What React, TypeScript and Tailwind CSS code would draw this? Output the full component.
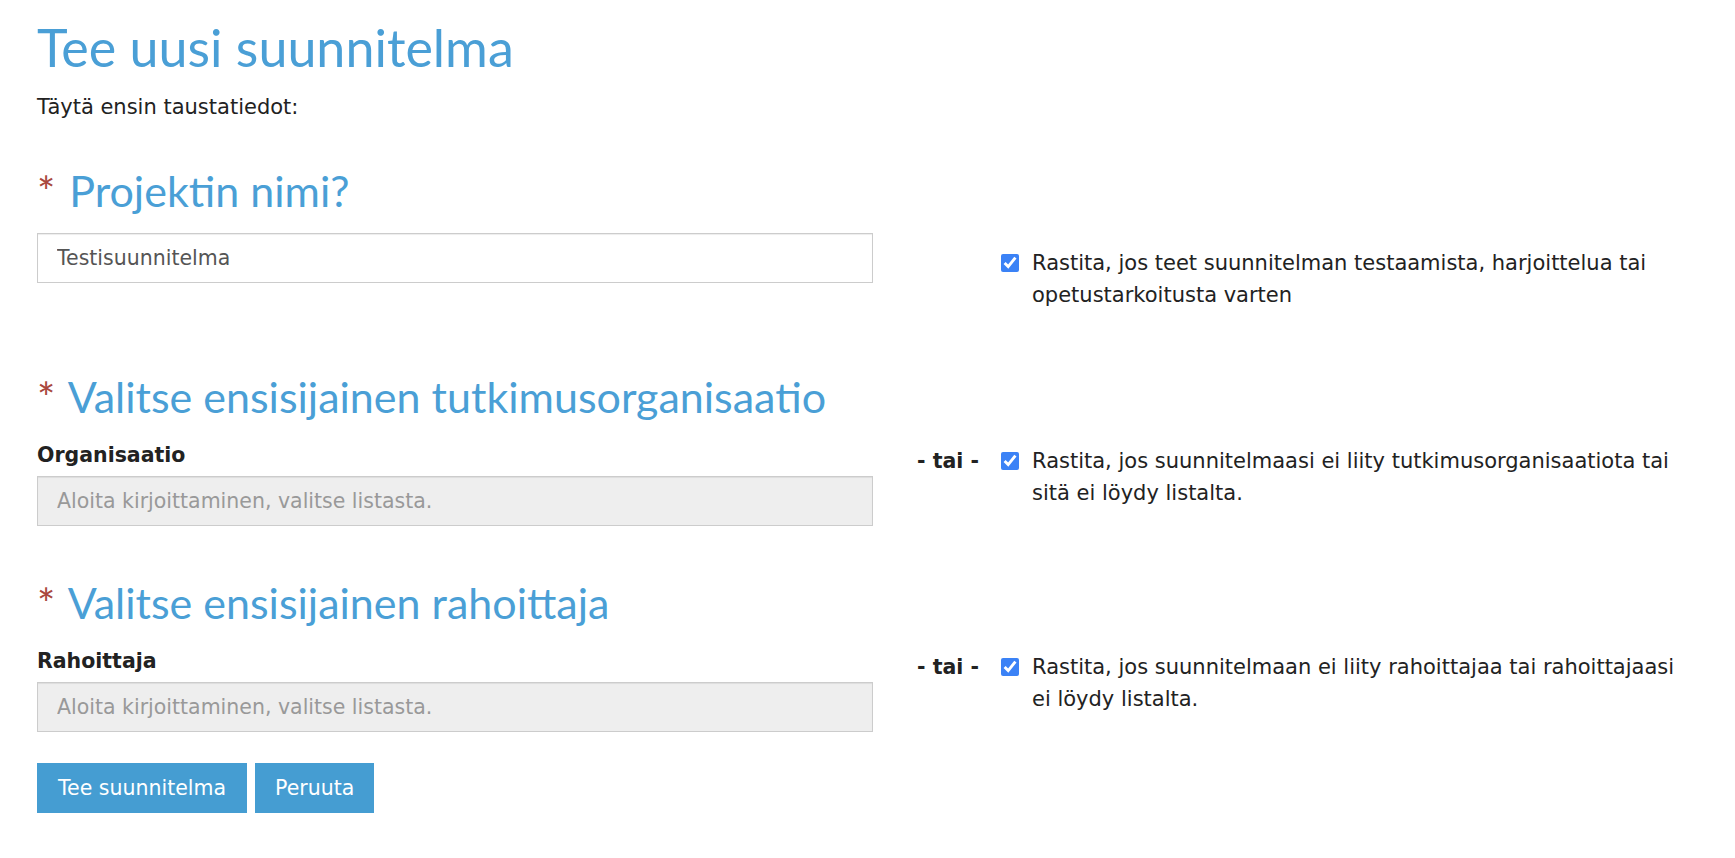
import type { FunctionComponent, ReactNode } from 'react'

type SectionProps = {
  title: string
  className: string
  children: ReactNode
}

const Section: FunctionComponent<SectionProps> = ({ title, className, children }) => {
  return (
    <section className={className}>
      <h2 className="font-['Lato','Open_Sans',sans-serif] text-[43px] leading-[48px] text-[#4a9fd6]">
        <span className="mr-[3px] text-[#a9473d]">*</span> {title}
      </h2>
      <div className="mt-[18px] flex items-start">{children}</div>
    </section>
  )
}

type OptOutProps = {
  text: string
  showOr?: boolean
  className: string
}

const OptOut: FunctionComponent<OptOutProps> = ({ text, showOr, className }) => {
  return (
    <div className={`flex min-w-0 flex-1 items-start text-[21px] ${className}`}>
      <div className="w-[106px] shrink-0 text-right text-[20.5px] font-bold text-[#222]">{showOr ? '- tai -' : ''}</div>
      <div className="ml-[22px] flex h-[32px] shrink-0 items-center">
        <input type="checkbox" defaultChecked className="m-0 h-[18px] w-[18px] accent-[#3b82f6]" />
      </div>
      <p className="ml-[13px] min-w-0 flex-1 text-[#222]">{text}</p>
    </div>
  )
}

type FieldProps = {
  label?: string
  value?: string
  placeholder?: string
}

const Field: FunctionComponent<FieldProps> = ({ label, value, placeholder }) => {
  return (
    <div className="w-[836px] shrink-0">
      {label && <div className="font-bold text-[#222]">{label}</div>}
      <input
        type="text"
        readOnly
        defaultValue={value}
        placeholder={placeholder}
        className={`block h-[50px] w-full border border-[#cccccc] px-[19px] shadow-[inset_0_1px_1px_rgba(0,0,0,0.075)] outline-none placeholder:text-[#999999] ${
          label ? 'mt-[5px] bg-[#eeeeee]' : 'bg-white text-[#555555]'
        }`}
      />
    </div>
  )
}

export default function App() {
  return (
    <div className="min-h-screen bg-white px-[37px] pb-[40px] font-['DejaVu_Sans',Verdana,sans-serif] text-[20.5px] leading-[32px] text-[#333]">
      <h1 className="pt-[18px] font-['Lato','Open_Sans',sans-serif] text-[52px] leading-[58px] text-[#4a9fd6]">
        Tee uusi suunnitelma
      </h1>
      <p className="mt-[15px] text-[21px] text-[#222]">Täytä ensin taustatiedot:</p>

      <Section title="Projektin nimi?" className="mt-[44px]">
        <Field value="Testisuunnitelma" />
        <OptOut
          className="pt-[14px]"
          text="Rastita, jos teet suunnitelman testaamista, harjoittelua tai opetustarkoitusta varten"
        />
      </Section>

      <Section title="Valitse ensisijainen tutkimusorganisaatio" className="mt-[62px]">
        <Field label="Organisaatio" placeholder="Aloita kirjoittaminen, valitse listasta." />
        <OptOut
          showOr
          className="pt-[6px]"
          text="Rastita, jos suunnitelmaasi ei liity tutkimusorganisaatiota tai sitä ei löydy listalta."
        />
      </Section>

      <Section title="Valitse ensisijainen rahoittaja" className="mt-[53px]">
        <Field label="Rahoittaja" placeholder="Aloita kirjoittaminen, valitse listasta." />
        <OptOut
          showOr
          className="pt-[6px]"
          text="Rastita, jos suunnitelmaan ei liity rahoittajaa tai rahoittajaasi ei löydy listalta."
        />
      </Section>

      <div className="mt-[31px] flex gap-[8px]">
        <button type="button" className="h-[50px] bg-[#459dd2] px-[21px] text-white">
          Tee suunnitelma
        </button>
        <button type="button" className="h-[50px] bg-[#459dd2] px-[20px] text-white">
          Peruuta
        </button>
      </div>
    </div>
  )
}
